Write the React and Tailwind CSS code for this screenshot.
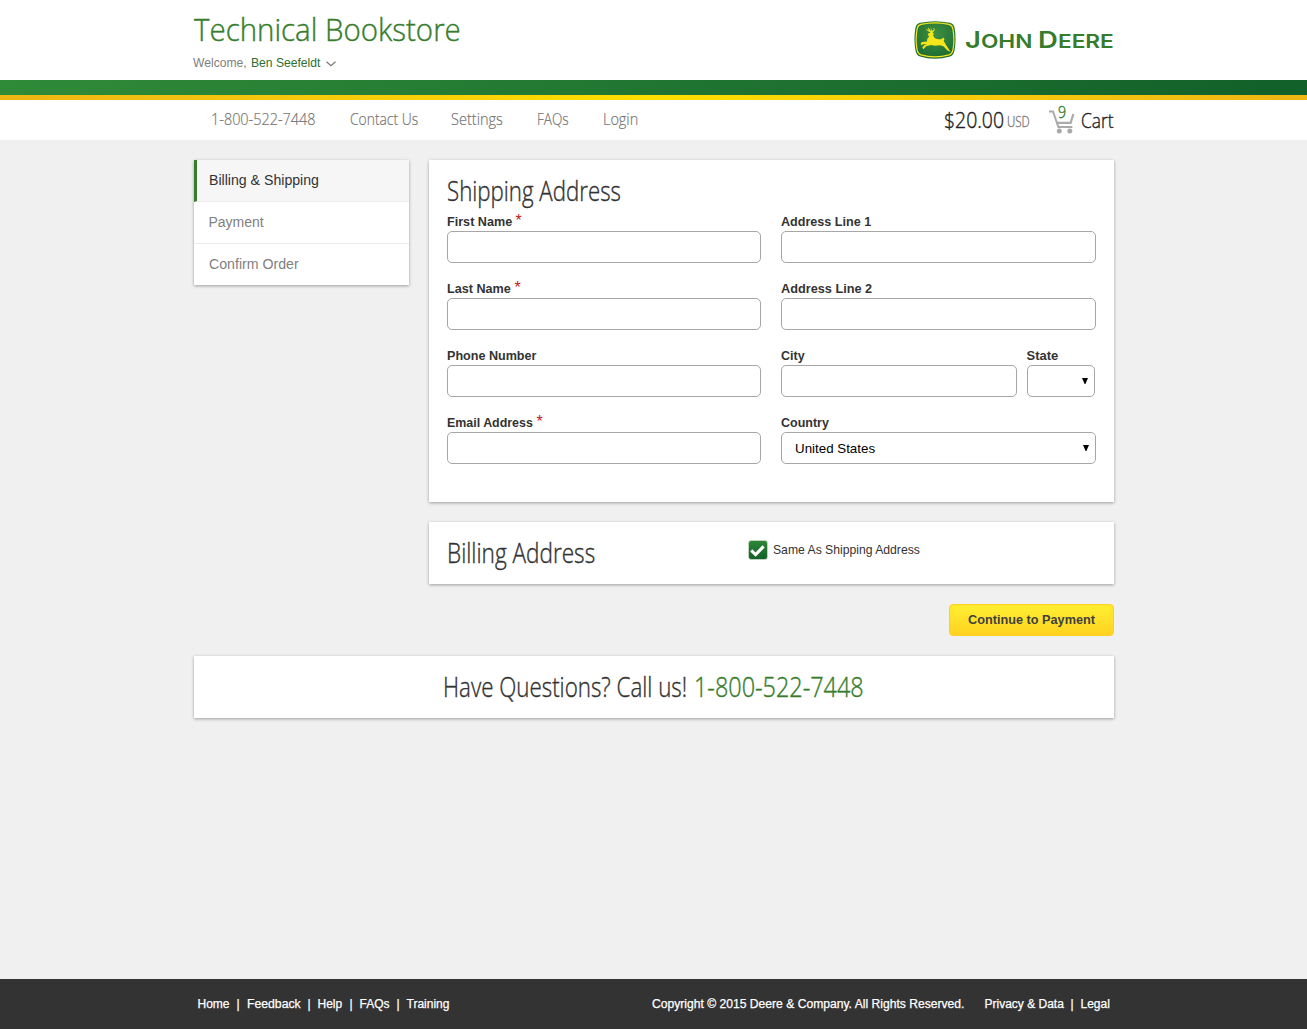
import { useLayoutEffect, useRef } from "react";

/* Text stretched or condensed horizontally so that it fills the width of its box. */
function Fit({ className = "", children }) {
  const box = useRef(null);
  const text = useRef(null);
  useLayoutEffect(() => {
    const natural = text.current.offsetWidth;
    const scale = box.current.clientWidth / natural;
    text.current.style.transform = `scaleX(${scale})`;
  }, []);
  return (
    <span ref={box} className={`block shrink-0 overflow-visible whitespace-nowrap text-left ${className}`}>
      <span ref={text} className="inline-block origin-left">{children}</span>
    </span>
  );
}

const display = "font-['Open_Sans'] font-light [-webkit-text-stroke:0.4px_currentColor]";
const displaySmall = "font-['Open_Sans'] font-light [-webkit-text-stroke:0.2px_currentColor]";
const card = "bg-white shadow-[0_1px_3px_rgba(0,0,0,0.35)]";

function Emblem() {
  return (
    <svg className="h-[38px] w-[42px]" viewBox="0 0 42 38">
      <defs>
        <radialGradient id="emblem" cx="50%" cy="35%" r="65%">
          <stop offset="0" stopColor="#3f9142" />
          <stop offset="1" stopColor="#1d6b33" />
        </radialGradient>
      </defs>
      <path d="M6 1.8Q21-1.4 36 1.8Q39.8 2.7 40.6 7Q42.6 19 40.4 30Q39.5 34.2 36 35.5Q21 40 6 35.5Q2.5 34.2 1.6 30Q-.6 19 1.4 7Q2.2 2.7 6 1.8Z" fill="url(#emblem)" />
      <path d="M7 3.4Q21 .4 35 3.4Q38.2 4.2 38.8 7.6Q41 19 38.8 29.4Q38.2 32.8 35 33.9Q21 37.8 7 33.9Q3.8 32.8 3.2 29.4Q1 19 3.2 7.6Q3.8 4.2 7 3.4Z" fill="none" stroke="#f5e51b" strokeWidth="1.2" />
      <path d="M14 12.8L16.6 11.6L14.6 10.6Q12.6 9.6 11.9 7.6L13.2 8.6L14.7 9.4L13.8 6.6L15.4 7.8L16.6 10.4L16.9 6.6L18 10L19.9 8.7L19.4 6.6L20.8 8.5Q20.3 10.6 18.6 11.4L20 12.9L18.9 14L20.6 17Q24 18.8 27.6 18L29.4 16.6L30.5 18.2L29.6 19.8L31.8 23.6L36.4 30.8L33.4 29.4L29.4 25.2L26.2 24.3L20.6 24.7L17 24L12 25.2L9.5 28.2L8.2 26.4L10.4 23.9L13 22.9L8.8 23.2L7.6 24.6L6.6 22.2L8.3 21L13 20.5L13.1 18.2L15.4 14.9L14 14.6Z" fill="#f5e51b" />
    </svg>
  );
}

function Cart() {
  return (
    <svg className="h-[24px] w-[26px]" viewBox="0 0 26 24" fill="none">
      <path d="M0 1.5H4L9.4 17H23.4" stroke="#aaa" strokeWidth="2" />
      <path d="M7.6 12.9H21.6L24.4 4" stroke="#aaa" strokeWidth="2.2" />
      <circle cx="10.3" cy="20.9" r="2.5" fill="#aaa" />
      <circle cx="20.8" cy="20.9" r="2.5" fill="#aaa" />
    </svg>
  );
}

function Triangle() {
  return (
    <svg className="h-[6px] w-[6px]" viewBox="0 0 6 6">
      <path d="M0 0H6L3.4 6H2.6Z" fill="#000" />
    </svg>
  );
}

function Field({ label, labelWidth, required, width = "w-[315px]", children }) {
  return (
    <div className={`h-[67px] ${width}`}>
      <div className="flex h-[18px] gap-1 text-[13px] font-bold leading-[18px] text-[#333]">
        <Fit className={labelWidth}>{label}</Fit>
        {required && <span className="-mt-px text-[16px] font-normal text-[#c02020]">*</span>}
      </div>
      <div className="flex h-8 items-center rounded-[5px] border border-[#a6a6a6] bg-white pl-[13px] pr-[6px] text-[13px] text-black">
        {children}
      </div>
    </div>
  );
}

function FooterLinks({ items }) {
  return items.map(([name, width], i) => (
    <span key={name} className="flex">
      {i > 0 && <span className="w-[17px] text-center">|</span>}
      <Fit className={width}>{name}</Fit>
    </span>
  ));
}

export default function App() {
  return (
    <div className="flex h-[1029px] w-full flex-col overflow-hidden bg-[#f0f0f0] font-['Liberation_Sans',sans-serif]">
      <header className="h-20 bg-white">
        <div className="mx-auto flex w-[920px] justify-between">
          <div className="pt-[9px]">
            <h1 className={`${display} text-[32px] leading-10 text-[#367c2b]`}>
              <Fit className="w-[267px]">Technical Bookstore</Fit>
            </h1>
            <div className="-ml-px mt-[4px] flex items-center text-[13px] leading-5 text-[#808080]">
              <Fit className="w-[54px]">Welcome,</Fit>
              <Fit className="ml-1 w-[69px] text-[#2f6f2f]">Ben Seefeldt</Fit>
              <svg className="ml-[6px] mt-[1px] h-[6px] w-[10px]" viewBox="0 0 10 6" fill="none">
                <path d="M.5 .8L5 4.8L9.5 .8" stroke="#777" strokeWidth="1.2" />
              </svg>
            </div>
          </div>
          <div className="flex pt-[21px]">
            <Emblem />
            <div className="ml-[9px] pt-[5px] font-['Inter'] text-[19px] font-semibold leading-7 text-[#367c2b]">
              <Fit className="w-[149px]">
                <span className="text-[23px]">J</span>OHN <span className="text-[23px]">D</span>EERE
              </Fit>
            </div>
          </div>
        </div>
      </header>
      <div className="h-[15px] bg-linear-to-r from-[#2f8b38] to-[#12602a]" />
      <div className="h-[5px] bg-linear-to-r from-[#edb614] via-[#ffde00] to-[#edb614]" />
      <div className="h-10 bg-white">
        <div className="mx-auto flex w-[920px] justify-between">
          <nav className={`${displaySmall} flex pl-[17px] pt-[5px] text-[16.5px] leading-7 text-[#757575]`}>
            <Fit className="w-[105px]">1-800-522-7448</Fit>
            <Fit className="ml-[34px] w-[68px]">Contact Us</Fit>
            <Fit className="ml-[33px] w-[52px]">Settings</Fit>
            <Fit className="ml-[34px] w-[32px]">FAQs</Fit>
            <Fit className="ml-[34px] w-[35px]">Login</Fit>
          </nav>
          <div className={`${display} -mr-px flex pr-[2px] pt-[5px] leading-7 text-[#222]`}>
            <Fit className="w-[60px] text-[22px]">$20.00</Fit>
            <Fit className="ml-[3px] mt-[3px] w-[23px] text-[14px] text-[#808080]">USD</Fit>
            <div className="relative ml-[19px] mt-[5px]">
              <Cart />
              <span className="absolute left-[9px] top-[-12px] text-[16px] text-[#367c2b]">
                <Fit className="w-[8px]">9</Fit>
              </span>
            </div>
            <Fit className="ml-[6px] mt-[2px] w-[32px] text-[20px]">Cart</Fit>
          </div>
        </div>
      </div>

      <main className="mx-auto w-[920px] flex-1 pt-5">
        <div className="flex items-start gap-5">
          <aside className={`w-[215px] ${card} text-[14px]`}>
            <div className="flex h-[42px] items-center border-b border-l-[3px] border-b-[#ebebeb] border-l-[#367c2b] bg-[#f6f6f6] pl-3 text-[#333]">
              <Fit className="w-[110px]">Billing &amp; Shipping</Fit>
            </div>
            <div className="flex h-[42px] items-center border-b border-[#ebebeb] pl-[15px] text-[#808080]">
              <Fit className="w-[55px]">Payment</Fit>
            </div>
            <div className="flex h-[41px] items-center pl-[15px] text-[#808080]">
              <Fit className="w-[90px]">Confirm Order</Fit>
            </div>
          </aside>

          <div className="w-[685px]">
            <section className={`h-[342px] ${card} pl-[18px] pt-[13px]`}>
              <h2 className={`${display} h-[40px] text-[27px] leading-9 text-[#333]`}>
                <Fit className="w-[174px]">Shipping Address</Fit>
              </h2>
              <div className="flex gap-5">
                <div>
                  <Field label="First Name" labelWidth="w-[65px]" required width="w-[314px]" />
                  <Field label="Last Name" labelWidth="w-[64px]" required width="w-[314px]" />
                  <Field label="Phone Number" labelWidth="w-[89px]" width="w-[314px]" />
                  <Field label="Email Address" labelWidth="w-[86px]" required width="w-[314px]" />
                </div>
                <div>
                  <Field label="Address Line 1" labelWidth="w-[90px]" />
                  <Field label="Address Line 2" labelWidth="w-[91px]" />
                  <div className="flex gap-[10px]">
                    <Field label="City" labelWidth="w-[24px]" width="w-[236px]" />
                    <Field label="State" labelWidth="w-[32px]" width="w-[68px]">
                      <span className="ml-auto"><Triangle /></span>
                    </Field>
                  </div>
                  <Field label="Country" labelWidth="w-[48px]">
                    <Fit className="w-[80px] pt-[2px]">United States</Fit>
                    <span className="ml-auto"><Triangle /></span>
                  </Field>
                </div>
              </div>
            </section>

            <section className={`mt-5 flex h-[62px] ${card} pl-[18px]`}>
              <h2 className={`${display} mt-[13px] w-[301px] text-[27px] leading-9 text-[#333]`}>
                <Fit className="w-[148px]">Billing Address</Fit>
              </h2>
              <div className="mt-[18px] flex h-5 items-center text-[13px] text-[#333]">
                <span className="flex h-5 w-5 items-center justify-center rounded-[3px] border border-[#bdd3bf] bg-linear-to-b from-[#2d8736] to-[#14602a]">
                  <svg className="h-[15px] w-[15px]" viewBox="0 0 15 15" fill="none">
                    <path d="M1.2 7.4L5.6 11.6L13.6 3.4" stroke="#fff" strokeWidth="3" />
                  </svg>
                </span>
                <Fit className="ml-[5px] w-[147px]">Same As Shipping Address</Fit>
              </div>
            </section>

            <button className="ml-auto mt-5 flex h-8 w-[165px] items-center justify-center rounded-[4px] border border-[#ffcf22] bg-linear-to-b from-[#fff032] to-[#ffd220] text-[13px] font-bold text-[#3f3f3f] shadow-[inset_0_0_4px_rgba(255,215,35,0.6)]">
              <Fit className="w-[127px]">Continue to Payment</Fit>
            </button>
          </div>
        </div>

        <section className={`mt-5 flex h-[62px] justify-center gap-[7px] ${card} ${display} pt-[13px] text-[27px] leading-9 text-[#333]`}>
          <Fit className="w-[244px]">Have Questions? Call us!</Fit>
          <Fit className="w-[170px] text-[#367c2b]">1-800-522-7448</Fit>
        </section>
      </main>

      <footer className="h-[50px] bg-[#333] text-[12px] leading-[50px] text-white [-webkit-text-stroke:0.25px_white]">
        <div className="mx-auto flex w-[912px]">
          <FooterLinks items={[["Home", "w-[32px]"], ["Feedback", "w-[54px]"], ["Help", "w-[25px]"], ["FAQs", "w-[30px]"], ["Training", "w-[43px]"]]} />
          <Fit className="ml-auto mr-[21px] w-[312px]">Copyright © 2015 Deere &amp; Company. All Rights Reserved.</Fit>
          <FooterLinks items={[["Privacy & Data", "w-[79px]"], ["Legal", "w-[29px]"]]} />
        </div>
      </footer>
    </div>
  );
}
